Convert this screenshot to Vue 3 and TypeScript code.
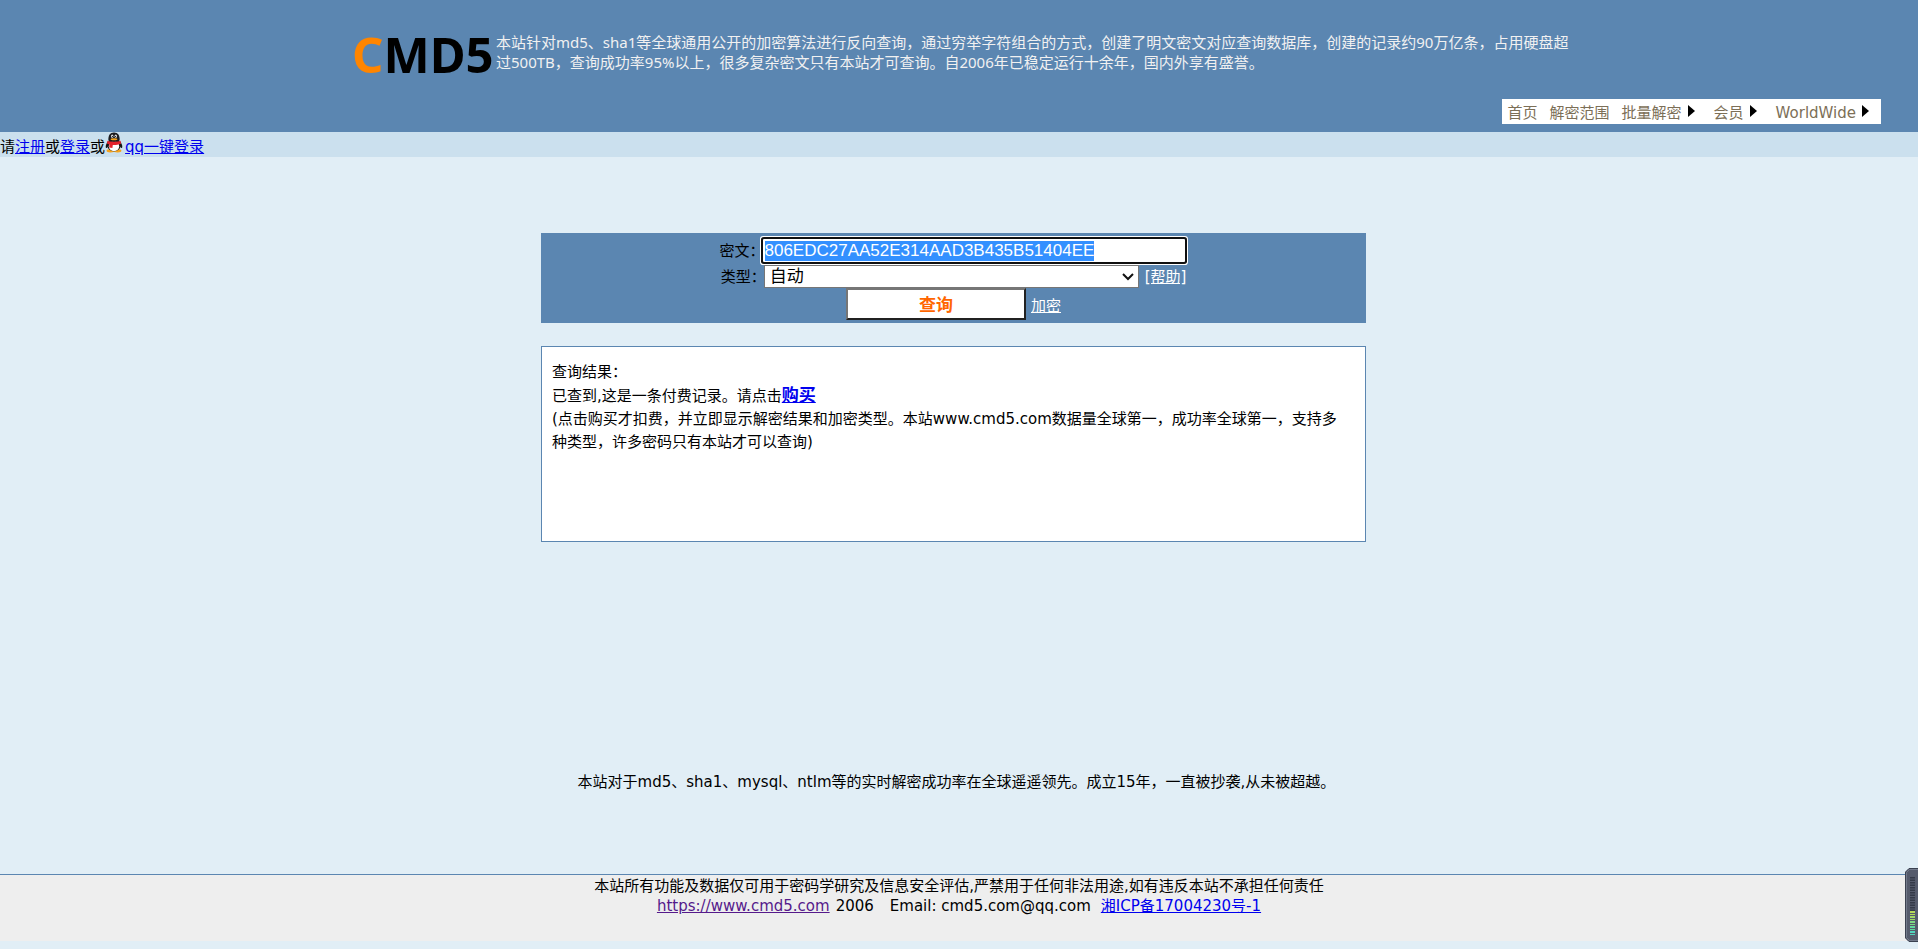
<script setup lang="ts">
import { onMounted, ref } from 'vue'

interface MenuItem {
  label: string
  submenu: boolean
}

const menu: MenuItem[] = [
  { label: '首页', submenu: false },
  { label: '解密范围', submenu: false },
  { label: '批量解密', submenu: true },
  { label: '会员', submenu: true },
  { label: 'WorldWide', submenu: true },
]

const cipher = ref('806EDC27AA52E314AAD3B435B51404EE')
const kind = ref('auto')
const cipherBox = ref<HTMLInputElement | null>(null)

const darkBars = Array.from({ length: 14 }, (_, i) => 9 + i * 2.5)
const litBars = [
  { y: 44, color: '#b4d85a' },
  { y: 49, color: '#9fd868' },
  { y: 54, color: '#7fd884' },
  { y: 59, color: '#62d8a0' },
  { y: 64, color: '#50d4bc' },
]

onMounted(() => {
  cipherBox.value?.focus()
  cipherBox.value?.select()
})
</script>

<template>
  <div class="page">
    <header class="header">
      <div class="intro">
        <div class="logo"><span class="logo-c">C</span>MD5</div>
        <p class="about">
          本站针对md5、sha1等全球通用公开的加密算法进行反向查询，通过穷举字符组合的方式，创建了明文密文对应查询数据库，创建的记录约90万亿条，占用硬盘超过500TB，查询成功率95%以上，很多复杂密文只有本站才可查询。自2006年已稳定运行十余年，国内外享有盛誉。
        </p>
      </div>
      <nav class="nav">
        <a v-for="item in menu" :key="item.label" href="#" class="nav-item">
          {{ item.label }}
          <svg v-if="item.submenu" class="arrow" width="7" height="12" viewBox="0 0 7 12" aria-hidden="true">
            <path d="M0 0 L7 6 L0 12 Z" fill="#000" />
          </svg>
        </a>
      </nav>
    </header>

    <div class="login">
      <span>请</span><a href="#">注册</a><span>或</span><a href="#">登录</a><span>或</span>
      <svg class="penguin" width="18" height="21" viewBox="0 0 18 21" aria-hidden="true">
        <ellipse cx="5.4" cy="18.8" rx="3.8" ry="1.7" fill="#f5a21b" />
        <ellipse cx="12.6" cy="18.8" rx="3.8" ry="1.7" fill="#f5a21b" />
        <path d="M3.4 9 C1.6 11 .3 13.8 .8 15.6 C1.2 16.6 2.4 15.4 3 14.4 Z" fill="#151515" />
        <path d="M14.6 9 C16.4 11 17.7 13.8 17.2 15.6 C16.8 16.6 15.6 15.4 15 14.4 Z" fill="#151515" />
        <ellipse cx="9" cy="13.2" rx="6.7" ry="6.2" fill="#151515" />
        <ellipse cx="9" cy="14.2" rx="5.2" ry="5" fill="#fff" />
        <path d="M3.4 8.6 C3 3.2 5 .4 9 .4 C13 .4 15 3.2 14.6 8.6 C13 10.4 5 10.4 3.4 8.6 Z" fill="#1b1b1f" />
        <ellipse cx="7.2" cy="4.3" rx="1.2" ry="1.7" fill="#ddd" />
        <ellipse cx="10.8" cy="4.3" rx="1.2" ry="1.7" fill="#ddd" />
        <circle cx="7.5" cy="4.6" r=".6" fill="#111" />
        <circle cx="10.5" cy="4.6" r=".6" fill="#111" />
        <ellipse cx="9" cy="7.2" rx="3.4" ry="1" fill="#f5a21b" />
        <path d="M2.4 8.8 C6 10.2 12 10.2 15.6 8.8 L16 11.8 C13 13 9.6 13.2 7.8 13 L7.4 16 L4.2 15.6 L4.4 12.6 C3.4 12.2 2.6 12 2 11.6 Z" fill="#e3222c" />
      </svg>
      <a href="#">qq一键登录</a>
    </div>

    <main class="main">
      <form class="query" @submit.prevent>
        <div class="row row-text">
          <label class="label" for="cipher">密文：</label>
          <input id="cipher" ref="cipherBox" v-model="cipher" class="cipher" type="text" />
        </div>
        <div class="row row-kind">
          <label class="label" for="kind">类型：</label>
          <div class="kind-wrap">
            <select id="kind" v-model="kind" class="kind">
              <option value="auto">自动</option>
            </select>
            <svg class="chevron" width="12" height="8" viewBox="0 0 12 8" aria-hidden="true">
              <path d="M1 1 L6 6 L11 1" fill="none" stroke="#111" stroke-width="2" />
            </svg>
          </div>
          <a class="light help" href="#">[帮助]</a>
        </div>
        <div class="row">
          <button class="submit" type="submit">查询</button>
          <a class="light encrypt" href="#">加密</a>
        </div>
      </form>

      <section class="result">
        <div>查询结果：</div>
        <div>已查到,这是一条付费记录。请点击<a class="buy" href="#">购买</a></div>
        <div>(点击购买才扣费，并立即显示解密结果和加密类型。本站www.cmd5.com数据量全球第一，成功率全球第一，支持多种类型，许多密码只有本站才可以查询)</div>
      </section>

      <p class="notice">本站对于md5、sha1、mysql、ntlm等的实时解密成功率在全球遥遥领先。成立15年，一直被抄袭,从未被超越。</p>
    </main>

    <footer class="footer">
      <div>本站所有功能及数据仅可用于密码学研究及信息安全评估,严禁用于任何非法用途,如有违反本站不承担任何责任</div>
      <div class="footer-line">
        <a class="visited" href="#">https://www.cmd5.com</a>
        <span>2006</span>
        <span class="mail">Email: cmd5.com@qq.com</span>
        <a href="#">湘ICP备17004230号-1</a>
      </div>
    </footer>

    <svg class="meter" width="13" height="74" viewBox="0 0 13 74" aria-hidden="true">
      <path d="M14 .5 H4 L.5 4 V70 L4 73.5 H14 Z" fill="#555b6c" stroke="#3b4150" />
      <path d="M14 1.5 H4.5 L1.5 4.5 V69.5 L4.5 72.5 H14" fill="none" stroke="#737a8b" />
      <rect v-for="y in darkBars" :key="y" x="5" :y="y" width="5" height="1.5" fill="#343a48" />
      <g v-for="bar in litBars" :key="bar.y">
        <rect x="5" :y="bar.y - 1" width="5" height="2" :fill="bar.color" />
        <rect x="5" :y="bar.y + 2" width="5" height="1" :fill="bar.color" />
      </g>
    </svg>
  </div>
</template>

<style>
html {
  background: #e1eef6;
}

body {
  margin: 0;
}
</style>

<style scoped>
.page {
  font-family: 'DejaVu Sans', 'Noto Sans CJK SC', sans-serif;
  font-size: 15px;
  line-height: 20px;
  color: #000;
}

a {
  color: #00e;
  text-decoration: underline;
}

.header {
  display: flex;
  flex-direction: column;
  padding: 32px 0 8px;
  background: #5b86b1;
}

.intro {
  display: flex;
  justify-content: center;
  padding-left: 14px;
}

.logo {
  width: 144px;
  font-family: 'Noto Sans', sans-serif;
  font-size: 49px;
  font-weight: 700;
  line-height: 44px;
}

.logo-c {
  color: #ff8500;
}

.about {
  width: 1084px;
  margin: 0;
  font-family: 'Noto Sans', 'Noto Sans CJK SC', sans-serif;
  color: #f1f1f1;
}

.nav {
  display: flex;
  align-self: flex-end;
  height: 25px;
  margin: 23px 37px 0 0;
  background: #fff;
}

.nav-item {
  display: flex;
  align-items: center;
  padding: 2px 6px 0;
  color: #7c6f57;
  text-decoration: none;
}

.arrow {
  margin: 0 7px 3px 6px;
}

.nav-item:last-child {
  padding-right: 5px;
}

.login {
  display: flex;
  align-items: flex-start;
  height: 25px;
  line-height: 30px;
  background: #cbe0ee;
}

.penguin {
  margin-right: 2px;
}

.main {
  width: 825px;
  margin: 0 auto;
  padding: 76px 11px 82px 0;
}

.query {
  padding: 3px 0;
  background: #5b86b1;
}

.row {
  display: flex;
  align-items: center;
  justify-content: center;
}

.row-text {
  height: 29px;
}

.row-kind {
  height: 23px;
}

.label {
  width: 43px;
  white-space: nowrap;
}

.cipher {
  box-sizing: border-box;
  width: 422px;
  height: 23px;
  margin-right: 3px;
  padding: 0 2px;
  border: 0;
  border-radius: 1px;
  outline: 0;
  box-shadow: 0 0 0 2px #101010, 0 0 0 3px #fff;
  background: #fff;
  font-family: 'Liberation Sans', Arial, sans-serif;
  font-size: 17px;
}

.cipher::selection {
  background: #3390ff;
  color: #fff;
}

.kind-wrap {
  position: relative;
  width: 375px;
}

.kind {
  display: block;
  box-sizing: border-box;
  width: 100%;
  height: 23px;
  padding: 0 5px;
  border: 1px solid #767676;
  border-radius: 0;
  appearance: none;
  background: #fff;
  font-family: 'Liberation Sans', 'Noto Sans CJK SC', sans-serif;
  font-size: 17px;
  line-height: 20px;
  color: #000;
}

.chevron {
  position: absolute;
  top: 8px;
  right: 5px;
  pointer-events: none;
}

.light {
  color: #fff;
}

.help {
  margin-left: 6px;
}

.submit {
  box-sizing: border-box;
  width: 180px;
  height: 32px;
  padding: 0 0 2px;
  border: 2px solid;
  border-color: #767676 #212121 #212121 #767676;
  background: #fff;
  font-family: 'Liberation Sans', 'Noto Sans CJK SC', sans-serif;
  font-size: 17px;
  font-weight: 700;
  color: #f60;
}

.encrypt {
  margin-left: 5px;
  padding-top: 4px;
}

.result {
  box-sizing: border-box;
  min-height: 196px;
  margin-top: 23px;
  padding: 14px 20px 14px 10px;
  border: 1px solid #5b86b1;
  background: #fff;
  line-height: 23px;
}

.buy {
  font-size: 17px;
  font-weight: 700;
}

.notice {
  margin: 230px 0 0;
  padding-left: 6px;
  text-align: center;
}

.footer {
  height: 65px;
  padding-top: 1px;
  border-top: 1px solid #5b86b1;
  background: #eee;
  text-align: center;
}

.footer-line {
  display: flex;
  justify-content: center;
  gap: 6px;
}

.visited {
  color: #551a8b;
}

.mail {
  margin: 0 4px 0 10px;
}

.meter {
  position: fixed;
  right: 0;
  bottom: 7px;
}
</style>
